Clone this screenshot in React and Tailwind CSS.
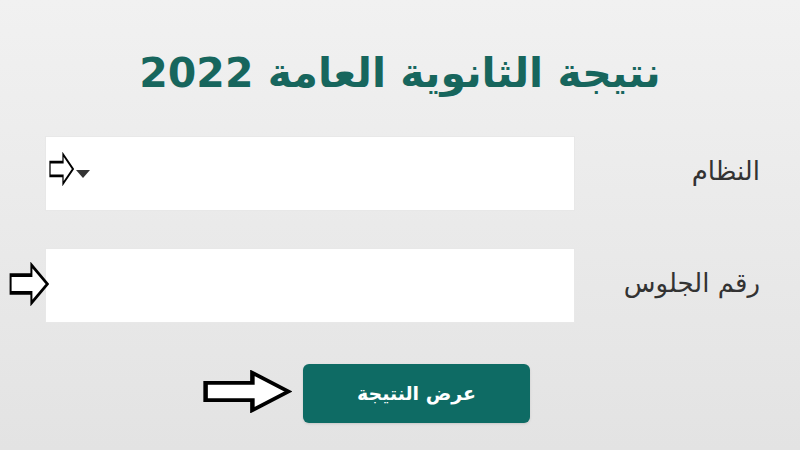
import React from 'react'

// outline "pointing" arrow, white fill with black stroke
const OutlineArrow = ({ className }) => (
  <svg viewBox="0 0 100 60" className={className} preserveAspectRatio="none">
    <path
      d="M4 18 H56 V4 L96 30 L56 56 V42 H4 Z"
      fill="#fff"
      stroke="#000"
      strokeWidth="5"
      strokeLinejoin="miter"
    />
  </svg>
)

const Row = ({ label, children, className = '' }) => (
  <div dir="rtl" className={`flex items-center pr-[40px] ${className}`}>
    <div className="w-[185px] text-[26px] text-[#333] leading-none pb-[6px]">{label}</div>
    <div className="w-[530px] h-[75px] bg-white border border-[#e8e8e8] flex items-center justify-end pl-[30px]">
      {children}
    </div>
  </div>
)

export default function App() {
  return (
    <div
      className="relative w-[800px] h-[450px] overflow-hidden bg-gradient-to-b from-[#f1f1f1] to-[#e3e3e3]"
      style={{ fontFamily: '"DejaVu Sans", "Noto Sans", sans-serif' }}
    >
      <h1
        dir="rtl"
        className="pt-[46px] text-center text-[41px] font-bold leading-[54px] text-[#17665d]"
      >
        نتيجة الثانوية العامة 2022
      </h1>

      <Row label="النظام" className="mt-[36px]">
        <span className="w-0 h-0 border-l-[7px] border-r-[7px] border-t-[8px] border-l-transparent border-r-transparent border-t-[#333]" />
      </Row>

      <Row label="رقم الجلوس" className="mt-[37px]" />

      <div className="mt-[41px] pl-[303px]">
        <button className="w-[227px] h-[59px] rounded-md bg-[#0e6b64] text-white text-[19px] font-bold shadow-sm">
          عرض النتيجة
        </button>
      </div>

      {/* pointer arrows over the form */}
      <OutlineArrow className="absolute left-[49px] top-[152px] w-[25px] h-[34px]" />
      <OutlineArrow className="absolute left-[9px] top-[262px] w-[40px] h-[44px]" />
      <OutlineArrow className="absolute left-[202px] top-[370px] w-[90px] h-[43px]" />
    </div>
  )
}
